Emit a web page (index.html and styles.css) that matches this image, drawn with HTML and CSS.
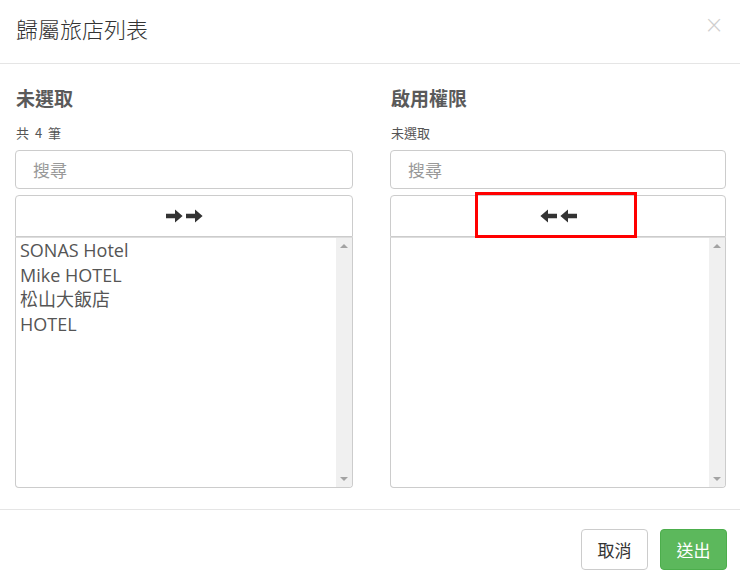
FILE: index.html
```html
<!DOCTYPE html>
<html lang="zh-Hant">
<head>
<meta charset="utf-8">
<title>歸屬旅店列表</title>
<link rel="stylesheet" href="styles.css">
</head>
<body>
<div class="modal">
  <div class="modal-header">
    <h4 class="modal-title">歸屬旅店列表</h4>
    <span class="close">×</span>
  </div>
  <div class="modal-body">
    <div class="col col-left">
      <h3 class="col-title">未選取</h3>
      <div class="col-info">共 4 筆</div>
      <input class="search" type="text" placeholder="搜尋">
      <div class="move-wrap">
        <button class="move-btn" type="button">
          <svg class="arrow" width="17" height="14" viewBox="0 0 17 14"><path d="M0 4.8 H9 V0.4 L16.6 7 L9 13.6 V9.2 H0 Z" fill="#333"/></svg>
          <svg class="arrow" width="17" height="14" viewBox="0 0 17 14"><path d="M0 4.8 H9 V0.4 L16.6 7 L9 13.6 V9.2 H0 Z" fill="#333"/></svg>
        </button>
      </div>
      <div class="listbox">
        <ul class="options">
          <li>SONAS Hotel</li>
          <li>Mike HOTEL</li>
          <li>松山大飯店</li>
          <li>HOTEL</li>
        </ul>
        <div class="scrollbar">
          <span class="tri up"></span>
          <span class="tri down"></span>
        </div>
      </div>
    </div>
    <div class="col col-right">
      <h3 class="col-title">啟用權限</h3>
      <div class="col-info">未選取</div>
      <input class="search" type="text" placeholder="搜尋">
      <div class="move-wrap">
        <button class="move-btn" type="button">
          <svg class="arrow" width="17" height="14" viewBox="0 0 17 14"><path d="M17 4.8 H8 V0.4 L0.4 7 L8 13.6 V9.2 H17 Z" fill="#333"/></svg>
          <svg class="arrow" width="17" height="14" viewBox="0 0 17 14"><path d="M17 4.8 H8 V0.4 L0.4 7 L8 13.6 V9.2 H17 Z" fill="#333"/></svg>
        </button>
        <div class="highlight"></div>
      </div>
      <div class="listbox">
        <ul class="options"></ul>
        <div class="scrollbar">
          <span class="tri up"></span>
          <span class="tri down"></span>
        </div>
      </div>
    </div>
  </div>
  <div class="modal-footer">
    <button class="btn btn-default" type="button">取消</button>
    <button class="btn btn-success" type="button">送出</button>
  </div>
</div>
</body>
</html>
```

FILE: styles.css
```css
* { box-sizing: border-box; }
html, body { margin: 0; padding: 0; background: #fff; }
body {
  font-family: "Noto Sans", "Noto Sans CJK TC", sans-serif;
  color: #333;
  width: 740px;
  height: 583px;
  overflow: hidden;
}
.modal { width: 740px; }
.modal-header {
  height: 64px;
  border-bottom: 1px solid #e5e5e5;
  display: flex;
  align-items: flex-start;
  justify-content: space-between;
  padding: 13px 16px 0 16px;
}
.modal-title {
  margin: 0;
  font-family: "Noto Sans CJK TC", sans-serif;
  font-weight: 300;
  font-size: 22px;
  line-height: 31px;
  color: #333;
}
.close {
  font-family: "DejaVu Sans", sans-serif;
  font-weight: 200;
  font-size: 24px;
  line-height: 22px;
  color: #cfcfcf;
  margin-top: 1px;
}
.modal-body {
  display: grid;
  grid-template-columns: 338px 336px;
  column-gap: 37px;
  padding: 20px 14px 0 15px;
  height: 445px;
}
.col { display: flex; flex-direction: column; }
.col-title {
  margin: 0 0 0 1px;
  font-family: "Noto Sans CJK TC", sans-serif;
  font-size: 19px;
  line-height: 27px;
  font-weight: 700;
  color: #5a5a5a;
}
.col-info {
  margin: 13px 0 0 1px;
  font-family: "Noto Sans CJK TC", sans-serif;
  font-size: 13px;
  line-height: 18px;
  word-spacing: 3px;
  color: #555;
}
.search {
  margin-top: 8px;
  height: 39px;
  width: 100%;
  border: 1px solid #ccc;
  border-radius: 4px;
  padding: 0 17px;
  font-family: "Noto Sans CJK TC", sans-serif;
  font-size: 17px;
  color: #555;
  outline: none;
}
.search::placeholder { color: #999; }
.move-wrap { position: relative; margin-top: 6px; }
.move-btn {
  display: flex;
  align-items: center;
  justify-content: center;
  gap: 3px;
  width: 100%;
  height: 42px;
  background: #fff;
  border: 1px solid #ccc;
  border-radius: 4px 4px 0 0;
  padding: 0;
}
.arrow { display: block; }
.highlight {
  position: absolute;
  left: 85px;
  top: -3px;
  width: 162px;
  height: 46px;
  border: 3px solid #f00;
}
.listbox {
  display: flex;
  height: 251px;
  border: 1px solid #ccc;
  border-top: 1px solid #ddd;
  border-radius: 0 0 4px 4px;
  overflow: hidden;
}
.options {
  flex: 1;
  list-style: none;
  margin: 0;
  padding: 0 0 0 4px;
  font-family: "Open Sans", "Noto Sans CJK TC", sans-serif;
  font-size: 18px;
  line-height: 24.5px;
  color: #555;
}
.options li { white-space: nowrap; }
.scrollbar {
  position: relative;
  width: 16px;
  background: #f0f0f0;
}
.tri {
  position: absolute;
  left: 4px;
  width: 0;
  height: 0;
  border-left: 4px solid transparent;
  border-right: 4px solid transparent;
}
.tri.up { top: 6px; border-bottom: 4px solid #a3a3a3; }
.tri.down { bottom: 6px; border-top: 4px solid #a3a3a3; }
.modal-footer {
  border-top: 1px solid #e5e5e5;
  display: flex;
  justify-content: flex-end;
  gap: 12px;
  padding: 19px 13px 0 0;
}
.btn {
  height: 41px;
  width: 67px;
  border-radius: 4px;
  font-family: "Noto Sans CJK TC", sans-serif;
  font-size: 17px;
  padding: 0;
}
.btn-default { background: #fff; border: 1px solid #ccc; color: #333; }
.btn-success { background: #5cb85c; border: 1px solid #4cae4c; color: #fff; }
```
